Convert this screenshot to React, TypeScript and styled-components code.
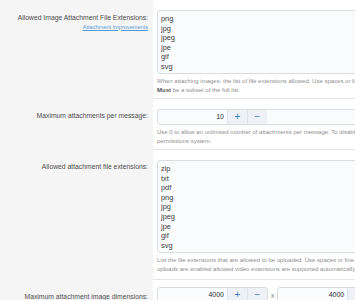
import React from "react";
import styled, { createGlobalStyle } from "styled-components";

const Global = createGlobalStyle`
  html, body { margin: 0; padding: 0; background: #fff; }
  body { font-family: "Liberation Sans", Arial, sans-serif; overflow: hidden; }
`;

const Page = styled.div`
  width: 355px;
  height: 300px;
  overflow: hidden;
`;

const Row = styled.div`
  display: grid;
  grid-template-columns: 153px 400px;
`;

const Term = styled.div`
  background: #f5f5f5;
  padding: 13px 5px 0 0;
  text-align: right;
`;

const Label = styled.div`
  font-size: 6.8px;
  line-height: 9.6px;
  color: #4e4e4e;
  white-space: nowrap;
`;

const Link = styled.a`
  display: block;
  font-size: 5.6px;
  line-height: 8px;
  color: #5b9bd5;
  text-decoration: underline;
  white-space: nowrap;
`;

const Desc = styled.div<{ $first?: boolean; $pt?: number; $pb?: number }>`
  border-top: ${(p) => (p.$first ? "none" : "1px solid #e6e6e6")};
  padding: ${(p) => p.$pt ?? 10}px 0 ${(p) => p.$pb ?? 3}px 4px;
  display: flex;
  flex-direction: column;
  gap: 3px;
`;

const Area = styled.textarea<{ $h: number }>`
  box-sizing: border-box;
  width: 300px;
  height: ${(p) => p.$h}px;
  margin: 0;
  padding: 3px 3px;
  border: 1px solid #d9dde2;
  border-radius: 3px;
  background: #f9fbfd;
  font-family: "Liberation Sans", Arial, sans-serif;
  font-size: 7.4px;
  line-height: 9.6px;
  color: #3a3a3a;
  resize: none;
  overflow: hidden;
  outline: none;
`;

const Hint = styled.div`
  font-size: 6px;
  line-height: 9px;
  color: #8f8f8f;
  white-space: nowrap;
  b { color: #555; font-weight: bold; }
`;

const Inline = styled.div`
  display: flex;
  align-items: center;
`;

const Group = styled.div`
  display: flex;
  height: 16px;
  box-sizing: border-box;
  border: 1px solid #d9dde2;
  border-radius: 3px;
  overflow: hidden;
  background: #f9fbfd;
`;

const Num = styled.div`
  width: 69px;
  box-sizing: border-box;
  padding-right: 3px;
  text-align: right;
  font-size: 7px;
  line-height: 14px;
  color: #333;
`;

const Step = styled.div`
  width: 20px;
  box-sizing: border-box;
  border-left: 1px solid #dde3ea;
  background: #eef2f7;
  color: #3d7fc4;
  font-size: 10px;
  line-height: 14px;
  text-align: center;
`;

const Times = styled.span`
  font-size: 6.5px;
  color: #777;
  padding: 0 3px;
`;

function Stepper({ value }: { value: string }) {
  return (
    <Group>
      <Num>{value}</Num>
      <Step>+</Step>
      <Step>−</Step>
    </Group>
  );
}

export default function App() {
  return (
    <Page>
      <Global />
      <Row>
        <Term>
          <Label>Allowed Image Attachment File Extensions:</Label>
          <Link>Attachment Improvements</Link>
        </Term>
        <Desc $first>
          <Area $h={64} readOnly defaultValue={"png\njpg\njpeg\njpe\ngif\nsvg"} />
          <Hint>
            When attaching images, the list of file extensions allowed. Use spaces or line breaks between extensions.
            <br />
            <b>Must</b> be a subset of the full list
          </Hint>
        </Desc>
      </Row>
      <Row>
        <Term>
          <Label>Maximum attachments per message:</Label>
        </Term>
        <Desc>
          <Stepper value="10" />
          <Hint>
            Use 0 to allow an unlimited number of attachments per message. To disable attachments entirely, use the
            <br />
            permissions system.
          </Hint>
        </Desc>
      </Row>
      <Row>
        <Term>
          <Label>Allowed attachment file extensions:</Label>
        </Term>
        <Desc $pb={5}>
          <Area $h={93} readOnly defaultValue={"zip\ntxt\npdf\npng\njpg\njpeg\njpe\ngif\nsvg"} />
          <Hint>
            List the file extensions that are allowed to be uploaded. Use spaces or line breaks between extensions. If video
            <br />
            uploads are enabled allowed video extensions are supported automatically.
          </Hint>
        </Desc>
      </Row>
      <Row>
        <Term>
          <Label>Maximum attachment image dimensions:</Label>
        </Term>
        <Desc $pt={7}>
          <Inline>
            <Stepper value="4000" />
            <Times>x</Times>
            <Stepper value="4000" />
          </Inline>
        </Desc>
      </Row>
    </Page>
  );
}
